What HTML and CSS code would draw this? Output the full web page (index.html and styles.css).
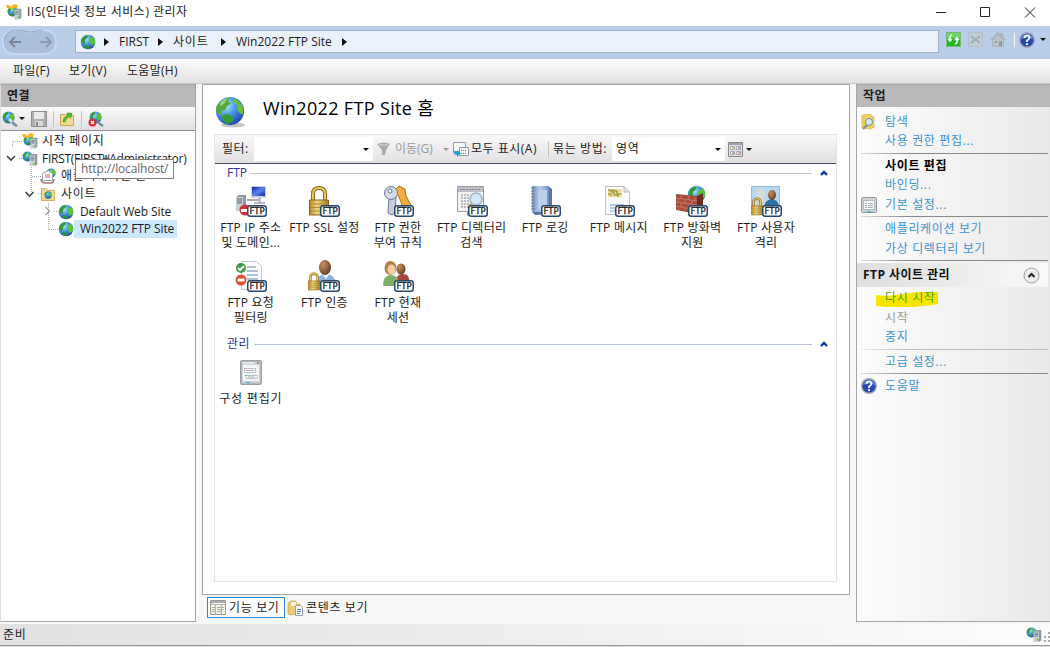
FILE: index.html
```html
<!DOCTYPE html>
<html lang="ko">
<head>
    <meta charset="UTF-8">
    <meta name="viewport" content="width=device-width, initial-scale=1.0">
    <title>IIS(인터넷 정보 서비스) 관리자</title>
    <link rel="stylesheet" href="styles.css">
</head>
<body>
    <!-- Icons -->
    <svg class="defs" width="0" height="0">
        <defs>
            <radialGradient id="sea" cx="0.35" cy="0.3" r="0.75">
                <stop offset="0" stop-color="#b5ebfb"/><stop offset="0.45" stop-color="#4b9be6"/><stop offset="1" stop-color="#1c45b0"/>
            </radialGradient>
            <linearGradient id="gold" x1="0" x2="1" y1="0" y2="0">
                <stop offset="0" stop-color="#b8892a"/><stop offset="0.4" stop-color="#f0d77c"/><stop offset="1" stop-color="#a87a1c"/>
            </linearGradient>
            <radialGradient id="skin" cx="0.35" cy="0.3" r="0.8">
                <stop offset="0" stop-color="#c98d5c"/><stop offset="1" stop-color="#5b3a22"/>
            </radialGradient>
            <linearGradient id="screen" x1="0" x2="1" y1="0" y2="1">
                <stop offset="0" stop-color="#0a1fa0"/><stop offset="0.5" stop-color="#5d86f0"/><stop offset="1" stop-color="#0d25a8"/>
            </linearGradient>
            <linearGradient id="book" x1="0" x2="1" y1="0" y2="0">
                <stop offset="0" stop-color="#7d98c2"/><stop offset="0.5" stop-color="#b3caea"/><stop offset="1" stop-color="#6b8bc0"/>
            </linearGradient>
        </defs>
        <symbol id="globe" viewBox="0 0 32 32">
            <circle cx="16" cy="16" r="15" fill="url(#sea)"/>
            <path d="M3 9Q8 2 15 2l-1 4 3 2-4 3-3 5-3-1-1 5-4-2Q0 13 3 9z" fill="#54ab3c"/>
            <path d="M20 3q7 2 10 9v8l-4-2-3-5 1-3-4-3z" fill="#6cc040"/>
            <path d="M7 21l6-2 7 4-1 4-5 3q-5-2-7-9z" fill="#359c34"/>
            <path d="M5 8q4-5 8-5l-3 5-4 3z" fill="#c5edbb" opacity=".6"/>
        </symbol>
        <symbol id="globe-small" viewBox="0 0 16 16">
            <circle cx="8" cy="8" r="7.300" fill="url(#sea)"/>
            <path d="M1 7q1-5 6-6l1 2-3 3v3l-2 1z" fill="#2f9e3a"/>
            <path d="M10 4l4-1q2 4 1 7l-3 2-3-4z" fill="#58c43a"/>
            <path d="M5 11l4 1v3q-3 0-5-2z" fill="#2a9438"/>
        </symbol>
        <symbol id="server" viewBox="0 0 12 16">
            <path d="M1 2l3-2h7v14l-3 2H1z" fill="#8d99a3"/>
            <path d="M1 2h7v14H1z" fill="#c9d0d6"/>
            <path d="M2 4h5M2 6h5M2 8h5" stroke="#5d6b78"/>
            <path d="M5 12h3v2H5z" fill="#7ac520"/>
        </symbol>
        <symbol id="site-server" viewBox="0 0 16 16">
            <use href="#globe-small" x="0" y="0" width="11" height="11"/>
            <use href="#server" x="7" y="2" width="9" height="14"/>
        </symbol>
        <symbol id="start-page" viewBox="0 0 16 16">
            <use href="#globe-small" x="1" y="2" width="11" height="11"/>
            <path d="M0 1l3 0 2 2 3-3 4 1-1 3-3 0-3 1-4-1z" fill="#f3b61f"/>
            <use href="#server" x="8" y="4" width="8" height="12"/>
        </symbol>
        <symbol id="connect" viewBox="0 0 18 16">
            <use href="#globe-small" x="1" y="0" width="13" height="13"/>
            <path d="M9 9l4 4 3 2" stroke="#6b8fa0" stroke-width="2.500" fill="none"/>
            <path d="M8 8l3 3" stroke="#d5dfe8" stroke-width="3"/>
        </symbol>
        <symbol id="disconnect" viewBox="0 0 18 16">
            <use href="#globe-small" x="2" y="0" width="13" height="13"/>
            <path d="M10 10l3 3 3 2" stroke="#6b8fa0" stroke-width="2.500" fill="none"/>
            <circle cx="5.500" cy="11.500" r="4" fill="#d8302c"/>
            <path d="M4 10l3 3m0-3l-3 3" stroke="#fff" stroke-width="1.300"/>
        </symbol>
        <symbol id="save" viewBox="0 0 16 16">
            <path d="M.5.5h15v15H.5z" fill="#adadad" stroke="#8c8c8c"/>
            <path d="M3 1h10v7H3z" fill="#e9e9e9"/><path d="M4 10h8v5H4z" fill="#d8d8d8"/><path d="M5 11h2v4H5z" fill="#888"/>
        </symbol>
        <symbol id="up-folder" viewBox="0 0 16 16">
            <path d="M1.500 3.500h5l1 1h7v10h-13z" fill="#f3dc95" stroke="#cfa650"/>
            <path d="M4 11q0-5 4-6V2l5 0-1 5-2-1q-3 1-4 5z" fill="#55b82c" stroke="#378a18" stroke-width=".5"/>
        </symbol>
        <symbol id="sites" viewBox="0 0 16 16">
            <path d="M1.500 2.500h5l1 2h7v10h-13z" fill="#f3d98e" stroke="#d5b060"/>
            <use href="#globe-small" x="4" y="5" width="8" height="8"/>
        </symbol>
        <symbol id="app-pool" viewBox="0 0 16 16">
            <use href="#globe-small" x="6" y="0" width="10" height="10"/>
            <path d="M2.500 5.500l6-3 4 3v7h-10z" fill="#fff" stroke="#98a3b3"/><path d="M5 7h5M5 9h5" stroke="#d35c5c"/>
            <path d="M1 11q0 4 5 4h4q4 0 4-4" stroke="#a9736b" fill="none" stroke-width="1.500"/>
        </symbol>
        <symbol id="ftp-tag" viewBox="0 0 20 12">
            <rect x=".75" y=".75" width="18.500" height="10.500" rx="2.500" fill="#fff" stroke="#29496b" stroke-width="1.500"/>
            <text x="10" y="9" class="tag-text">FTP</text>
        </symbol>
        <symbol id="lock" viewBox="0 0 20 30">
            <path d="M4 15V8q0-6 6-6t6 6v7" fill="none" stroke="#8d6c20" stroke-width="4"/>
            <path d="M4 15V8q0-6 6-6t6 6v7" fill="none" stroke="#e3c667" stroke-width="2"/>
            <path d="M.5 14h19v15H.5z" fill="url(#gold)" stroke="#8d6516"/>
            <path d="M1 18h18M1 21.500h18M1 25h18" stroke="#b08c38"/>
        </symbol>
        <symbol id="ip" viewBox="0 0 34 34">
            <use href="#server" x="1" y="8" width="12" height="20"/>
            <path d="M13 15h12v-4" stroke="#aaa" fill="none" stroke-width="2"/>
            <path d="M17 1h15v12H17z" fill="#cdd2dc"/><path d="M18 2h13v9H18z" fill="url(#screen)"/>
            <path d="M24 13h3v4h4v2H20v-2h4z" fill="#b5bac3"/>
            <circle cx="11" cy="25" r="5.500" fill="#d4323a"/><path d="M7 24h6v3H7z" fill="#fff"/>
        </symbol>
        <symbol id="ssl" viewBox="0 0 34 34"><use href="#lock" x="2" y="1" width="20" height="30"/></symbol>
        <symbol id="keys" viewBox="0 0 34 34">
            <path d="M14 5l4-4 6 3 1 7 5 9-3 6-4-1-5-13z" fill="#f1ae3c" stroke="#b0731a"/>
            <path d="M8 12h7l-1 15-3 3-4-2z" fill="#c7cddd" stroke="#707991"/>
            <circle cx="10" cy="8" r="6.500" fill="#d5dae6" stroke="#707991"/>
            <circle cx="9" cy="6" r="2" fill="#fff" stroke="#707991"/>
        </symbol>
        <symbol id="browse" viewBox="0 0 34 34">
            <path d="M2.500 1.500h26v25h-12l-4 4v-4h-10z" fill="#f2f3f4" stroke="#969ca3"/>
            <path d="M3 2h25v5H3z" fill="#bdc1c7"/>
            <path d="M5 4.500h20M6 10h8M6 13h8M6 16h8M6 19h8M6 22h8" stroke="#7d848c" stroke-dasharray="2 1"/>
            <circle cx="21" cy="14" r="6" fill="#cfe8fa" stroke="#9fb4c6" stroke-width="1.500"/>
            <path d="M17 19l-4 4" stroke="#e39a43" stroke-width="3"/>
        </symbol>
        <symbol id="log" viewBox="0 0 34 34">
            <path d="M4 1h16l4 3v25l-17 1-3-3z" fill="#5874a5"/>
            <path d="M4 1h17v26H4z" fill="url(#book)"/><path d="M10 5h9v19h-9z" fill="#bdd0eb"/>
            <path d="M3 3h4M3 6h4M3 9h4M3 12h4M3 15h4M3 18h4M3 21h4M3 24h4" stroke="#6a7890"/>
        </symbol>
        <symbol id="message" viewBox="0 0 34 34">
            <path d="M3.500 1.500h19l5 5v23h-24z" fill="#fafbfc" stroke="#bcc1c6"/>
            <path d="M22 2v5h5" fill="#e3e3e3" stroke="#bbb"/>
            <path d="M6 4h14v8H6z" fill="#eddf8e"/>
            <path d="M6 5h3v2h3v3h4v2M11 4v2h4v3h4M6 9h3v2" fill="none" stroke="#8a7b3c"/>
            <path d="M8 20h14M8 23h14M8 26h14" stroke="#7897c6"/>
        </symbol>
        <symbol id="firewall" viewBox="0 0 34 34">
            <use href="#globe-small" x="12" y="0" width="19" height="19"/>
            <path d="M1 9l21 2v18L1 25z" fill="#a74b3b"/>
            <path d="M1 13l21 3M1 17l21 3M1 21l21 4M6 10v4M14 11v4M20 12v4M3 14v3M10 15v4M17 16v4M6 18v4M14 19v5M3 22v3M10 23v4" stroke="#c98270" stroke-width=".8" fill="none"/>
            <path d="M22 11l6-3v17l-6 4z" fill="#702b22"/>
        </symbol>
        <symbol id="isolation" viewBox="0 0 34 34">
            <path d="M2.500 1.500h28v20h-28z" fill="#b8d9ee" stroke="#98b9d0"/>
            <path d="M4 20q1-6 8-7 7 1 8 7z" fill="#cbd6dd"/><circle cx="12" cy="9" r="5" fill="#d7dcdf"/>
            <path d="M15 21q1-6 8-7 6 1 7 7z" fill="#2d6fab"/><ellipse cx="23" cy="10" rx="4" ry="5" fill="url(#skin)"/>
            <use href="#lock" x="2" y="12" width="12" height="19"/>
        </symbol>
        <symbol id="filtering" viewBox="0 0 34 34">
            <path d="M7.500 1.500h15l5 5v23h-20z" fill="#fafcfe" stroke="#b9c7d2"/>
            <path d="M13 7h9M13 11h11M13 15h11M13 19h11M13 23h11" stroke="#6387b5"/>
            <circle cx="7" cy="8" r="5" fill="#379c42"/><path d="M4 8l2 2 4-4" stroke="#fff" fill="none" stroke-width="2"/>
            <circle cx="7" cy="20" r="5.500" fill="#e4502e"/><path d="M3.500 18.500h7v3h-7z" fill="#fff"/>
        </symbol>
        <symbol id="auth" viewBox="0 0 34 34">
            <path d="M9 24q1-10 10-10t10 10z" fill="#8ab5d8"/><path d="M15 14l4 5 3-5z" fill="#fff"/>
            <ellipse cx="18" cy="7.500" rx="6" ry="7.500" fill="url(#skin)"/>
            <use href="#lock" x="1" y="12" width="12" height="19"/>
        </symbol>
        <symbol id="sessions" viewBox="0 0 34 34">
            <path d="M15 22q0-8 7-8t6 8z" fill="#aa453e"/><ellipse cx="20" cy="9" rx="4.500" ry="5.500" fill="url(#skin)"/>
            <path d="M2 26q0-11 8-11t8 11z" fill="#7fad63"/>
            <ellipse cx="9.500" cy="8" rx="6" ry="7" fill="#b58145"/><ellipse cx="10.500" cy="9.500" rx="4" ry="5" fill="#f2cda8"/>
        </symbol>
        <symbol id="config" viewBox="0 0 22 25">
            <rect x=".75" y=".75" width="20.500" height="23.500" rx="1.500" fill="#cdd1d5" stroke="#989ea4" stroke-width="1.500"/>
            <path d="M3 5h16v16H3z" fill="#f3f5f6"/><path d="M3 3h11" stroke="#fff"/><path d="M17 3h2" stroke="#555"/>
            <path d="M4.500 8.500h11v4h-11zM6.500 15.500h11v3h-11z" fill="#fff" stroke="#bac0c5"/>
            <path d="M6 10.500h8M8 17h7" stroke="#a3aeb5"/><path d="M6 22.500h4" stroke="#34bde0"/><path d="M5 15.500h2" stroke="#34bde0"/>
        </symbol>
        <symbol id="settings" viewBox="0 0 16 16">
            <rect x=".5" y=".5" width="15" height="15" rx="1" fill="#d0d4d8" stroke="#90979d"/>
            <path d="M2.500 3.500h11v9h-11z" fill="#fafafa" stroke="#b0b8c0"/>
            <path d="M4 6.500h2M7 6.500h5M4 8.500h2M7 8.500h5M4 10.500h2M7 10.500h5" stroke="#a2adb7"/><path d="M6 14.500h4" stroke="#2ec0e8"/>
        </symbol>
        <symbol id="help" viewBox="0 0 16 16">
            <circle cx="8" cy="8" r="7.300" fill="#2648b4" stroke="#a3a8b4" stroke-width="1.400"/>
            <path d="M2 7q1-5 6-5t6 5q-6-2-12 0z" fill="#6484d6"/>
            <path d="M5.500 6q0-2.500 2.500-2.500t2.500 2.200Q10.500 7 8 8.500V10" fill="none" stroke="#fff" stroke-width="1.700"/>
            <circle cx="8" cy="12.200" r="1.100" fill="#fff"/>
        </symbol>
        <symbol id="explore" viewBox="0 0 16 16">
            <path d="M1 1l9-1v2l3 1v10l-3 2-9-1z" fill="#efcf5f" stroke="#d3b253" stroke-width=".7"/>
            <circle cx="8" cy="8" r="3.500" fill="#d4ebf6" stroke="#6f90a5"/><path d="M6 11l-4 4" stroke="#7f8f9b" stroke-width="2"/>
        </symbol>
        <symbol id="funnel" viewBox="0 0 14 14">
            <path d="M0 2q7-3 13 0L9 8l-1 5H5V8z" fill="#aaa"/><path d="M2 3h9" stroke="#d9d9d9"/>
        </symbol>
        <symbol id="show-all" viewBox="0 0 16 16">
            <path d="M.5 1.500h12v9H.5z" fill="#f7fafc" stroke="#8a9bae"/><path d="M6.500 6.500h9v8h-9z" fill="#fff" stroke="#8a9bae"/>
            <path d="M8 9.500h6M8 12.500h6" stroke="#5878a5" stroke-dasharray="1 1"/>
            <path d="M0 8q1 3 4 3V9l4 3.500L4 16v-2q-4 0-4-6z" fill="#29a0d2"/>
        </symbol>
        <symbol id="view" viewBox="0 0 15 15">
            <path d="M.5.5h14v14H.5z" fill="#e0e0e0" stroke="#888"/><path d="M1 2h13" stroke="#99a5bb" stroke-width="2"/>
            <path d="M2.500 4.500h4v3h-4zM8.500 4.500h4v3h-4zM2.500 9.500h4v3h-4zM8.500 9.500h4v3h-4z" fill="#fff" stroke="#aaa"/>
            <path d="M4 6h2" stroke="#b89430"/><path d="M10 6h2M4 11h2" stroke="#3e68bd"/><path d="M10 11h2" stroke="#d2582f"/>
        </symbol>
        <symbol id="content" viewBox="0 0 16 16">
            <path d="M1 3l3-2h5v3h4v9l-9 2-3-1z" fill="#ecca78" stroke="#c5a255" stroke-width=".7"/><path d="M4 2h5v4H4z" fill="#f9f3df"/>
            <path d="M8.500 5.500h5l2 2v8h-7z" fill="#fff" stroke="#91a0b2"/><path d="M10 9.500h4M10 11.500h4M10 13.500h3" stroke="#5378b5"/>
        </symbol>
        <symbol id="features" viewBox="0 0 16 15">
            <path d="M.5.500h15v14H.5z" fill="#f2f2ee" stroke="#9a9a94"/><path d="M1 2h14" stroke="#a9adb0" stroke-width="2"/>
            <path d="M1 4.500h14M5.500 4v10M11.500 4v10" stroke="#b5b5b0"/><path d="M2 7.500h3M2 9.500h3M2 11.500h3M7 7.500h4M7 9.500h4M7 11.500h4M12 7.500h2M12 9.500h2" stroke="#b1ac92"/>
        </symbol>
    </svg>

    <!-- Title bar -->
    <div class="titlebar">
        <svg class="icon16"><use href="#start-page"/></svg>
        <span class="title">IIS(인터넷 정보 서비스) 관리자</span>
        <svg class="window-buttons" width="110" height="14" fill="none" stroke="#222">
            <path d="M6 7.500h10M50.500 2.500h9v9h-9zM95 2.500l10 10M105 2.500l-10 10"/>
        </svg>
    </div>

    <!-- Address bar -->
    <div class="addressbar">
        <svg class="nav" width="56" height="28" viewBox="0 0 56 28">
            <path d="M14 2q6 0 10 1.500 4 1 9 0 5-1.500 9-1.500 13 1 13 12T43 26H13Q2 25 2 14T14 2z" fill="#a9bfdb" stroke="#cbdcf0" stroke-width="1.500"/>
            <path d="M3 13Q4 3 14 2q6 0 10 1.500 4 1 9 0 5-1.500 9-1.500" fill="none" stroke="#8fa5c2"/>
            <path d="M20 14H9m5-5l-5 5 5 5" fill="none" stroke="#7c8794" stroke-width="2"/>
            <path d="M39 14h11m-5-5l5 5-5 5" fill="none" stroke="#8d9bb0" stroke-width="2"/>
        </svg>
        <div class="path">
            <svg class="icon16"><use href="#globe-small"/></svg>
            <i class="arrow"></i><span class="crumb first">FIRST</span>
            <i class="arrow"></i><span class="crumb sites">사이트</span>
            <i class="arrow"></i><span class="crumb site">Win2022 FTP Site</span>
            <i class="arrow"></i>
        </div>
        <svg width="15" height="15"><path d="M.5.500h14v14H.5z" fill="#1fba1c" stroke="#77bb74"/><path d="M1 1h13v5H1z" fill="#69d562"/><path d="M6 3q-3 1-2 5M2 7l2 2 2-2M9 12q3-1 2-5M9 8l2-2 2 2" stroke="#fff" fill="none" stroke-width="1.700"/></svg>
        <svg width="15" height="15"><path d="M.5.500h14v14H.5z" fill="#c3ccd6" stroke="#b4bfcc"/><path d="M3 4l9 7M12 4l-9 7" stroke="#a0abb8" stroke-width="1.700"/></svg>
        <svg width="16" height="16"><path d="M0 8l8-8 2 2V1h3v4l3 3h-2v7H2V8z" fill="#a9b3be"/><path d="M3 8l5-5 5 5v6H3z" fill="#bac2cb"/><path d="M5 9h2v2H5zM9 9h3v5H9z" fill="#8f98a3"/></svg>
        <i class="divider"></i>
        <svg class="icon16 help"><use href="#help"/></svg>
        <i class="caret"></i>
    </div>

    <div class="menubar">
        <span class="file">파일(F)</span><span class="show">보기(V)</span><span class="helpmenu">도움말(H)</span>
    </div>

    <div class="main">
        <!-- Connections -->
        <div class="panel connections">
            <div class="panel-title">연결</div>
            <div class="toolbar">
                <svg width="18" height="16"><use href="#connect"/></svg>
                <i class="caret"></i>
                <svg class="icon16"><use href="#save"/></svg>
                <i class="sep"></i>
                <svg class="icon16"><use href="#up-folder"/></svg>
                <i class="sep"></i>
                <svg width="18" height="16"><use href="#disconnect"/></svg>
            </div>
            <div class="tree">
                <svg class="tree-lines" width="80" height="110" fill="none">
                    <path d="M11.500 16V10.500H22M18 27.500h4M30.500 36v26M31 45.500h9M37 62.500h4M47.500 72v27M53 80.500h4M48 98.500h9" stroke="#a8a8a8" stroke-dasharray="1 1"/>
                    <path d="M6 25l4 4 4-4M24.500 61l4 4 4-4" stroke="#444" stroke-width="1.600"/>
                    <path d="M44.500 76l4 4-4 4" stroke="#a0a0a0" stroke-width="1.400"/>
                </svg>
                <div class="node level0"><svg class="icon16"><use href="#start-page"/></svg><span>시작 페이지</span></div>
                <div class="node level0"><svg class="icon16"><use href="#site-server"/></svg><span class="server-name">FIRST(FIRST₩Administrator)</span></div>
                <div class="node level1"><svg class="icon16"><use href="#app-pool"/></svg><span>애플리케이션 풀</span></div>
                <div class="node level1"><svg class="icon16"><use href="#sites"/></svg><span>사이트</span></div>
                <div class="node level2"><svg class="icon16"><use href="#globe-small"/></svg><span>Default Web Site</span></div>
                <div class="node level2 selected"><svg class="icon16"><use href="#globe-small"/></svg><span>Win2022 FTP Site</span></div>
                <div class="tooltip">http://localhost/</div>
            </div>
        </div>

        <!-- Features -->
        <div class="center">
            <div class="home">
                <div class="heading">
                    <svg width="31" height="33"><ellipse cx="18" cy="29" rx="12" ry="2.500" fill="#c5c5c5"/><use href="#globe" width="30" height="30"/></svg>
                    <h1>Win2022 FTP Site 홈</h1>
                </div>
                <div class="features">
                    <div class="filterbar">
                        <span class="filter-label">필터:</span>
                        <div class="combo filter"><i class="caret"></i></div>
                        <svg width="14" height="14"><use href="#funnel"/></svg>
                        <span class="go">이동(G)</span><i class="caret dim"></i>
                        <svg class="icon16"><use href="#show-all"/></svg>
                        <span class="show-all">모두 표시(A)</span>
                        <i class="sep"></i>
                        <span class="group-label">묶는 방법:</span>
                        <div class="combo group"><span>영역</span><i class="caret"></i></div>
                        <svg width="15" height="15"><use href="#view"/></svg><i class="caret last"></i>
                    </div>
                    <div class="group-title"><span>FTP</span><i></i><svg width="8" height="6"><path d="M1 5l3-3 3 3" fill="none" stroke="#0a3a9c" stroke-width="2.400"/></svg></div>
                    <div class="grid">
                        <div class="item"><svg width="34" height="34"><use href="#ip"/><use href="#ftp-tag" x="13" y="20" width="20" height="12"/></svg><span>FTP IP 주소<br>및 도메인...</span></div>
                        <div class="item"><svg width="34" height="34"><use href="#ssl"/><use href="#ftp-tag" x="13" y="20" width="20" height="12"/></svg><span>FTP SSL 설정</span></div>
                        <div class="item"><svg width="34" height="34"><use href="#keys"/><use href="#ftp-tag" x="13" y="20" width="20" height="12"/></svg><span>FTP 권한<br>부여 규칙</span></div>
                        <div class="item"><svg width="34" height="34"><use href="#browse"/><use href="#ftp-tag" x="13" y="20" width="20" height="12"/></svg><span>FTP 디렉터리<br>검색</span></div>
                        <div class="item"><svg width="34" height="34"><use href="#log"/><use href="#ftp-tag" x="13" y="20" width="20" height="12"/></svg><span>FTP 로깅</span></div>
                        <div class="item"><svg width="34" height="34"><use href="#message"/><use href="#ftp-tag" x="13" y="20" width="20" height="12"/></svg><span>FTP 메시지</span></div>
                        <div class="item"><svg width="34" height="34"><use href="#firewall"/><use href="#ftp-tag" x="13" y="20" width="20" height="12"/></svg><span>FTP 방화벽<br>지원</span></div>
                        <div class="item"><svg width="34" height="34"><use href="#isolation"/><use href="#ftp-tag" x="13" y="20" width="20" height="12"/></svg><span>FTP 사용자<br>격리</span></div>
                        <div class="item"><svg width="34" height="34"><use href="#filtering"/><use href="#ftp-tag" x="13" y="20" width="20" height="12"/></svg><span>FTP 요청<br>필터링</span></div>
                        <div class="item"><svg width="34" height="34"><use href="#auth"/><use href="#ftp-tag" x="13" y="20" width="20" height="12"/></svg><span>FTP 인증</span></div>
                        <div class="item"><svg width="34" height="34"><use href="#sessions"/><use href="#ftp-tag" x="13" y="20" width="20" height="12"/></svg><span>FTP 현재<br>세션</span></div>
                    </div>
                    <div class="group-title manage"><span>관리</span><i></i><svg width="8" height="6"><path d="M1 5l3-3 3 3" fill="none" stroke="#0a3a9c" stroke-width="2.400"/></svg></div>
                    <div class="grid">
                        <div class="item config"><svg width="22" height="25"><use href="#config"/></svg><span>구성 편집기</span></div>
                    </div>
                </div>
            </div>
            <div class="tabs">
                <div class="tab active"><svg width="16" height="15"><use href="#features"/></svg><span>기능 보기</span></div>
                <div class="tab"><svg class="icon16"><use href="#content"/></svg><span>콘텐츠 보기</span></div>
            </div>
        </div>

        <!-- Actions -->
        <div class="panel actions">
            <div class="panel-title">작업</div>
            <div class="action-list">
                <div class="action"><svg class="icon16"><use href="#explore"/></svg>탐색</div>
                <div class="action">사용 권한 편집...</div>
                <hr>
                <div class="action strong">사이트 편집</div>
                <div class="action">바인딩...</div>
                <div class="action"><svg class="icon16"><use href="#settings"/></svg>기본 설정...</div>
                <hr>
                <div class="action">애플리케이션 보기</div>
                <div class="action">가상 디렉터리 보기</div>
                <hr>
                <div class="section"><span>FTP 사이트 관리</span>
                    <svg width="17" height="17"><circle cx="8.500" cy="8.500" r="7.500" fill="#eee" stroke="#a0a0a0"/><path d="M5.500 10l3-3 3 3" fill="none" stroke="#222" stroke-width="2"/></svg>
                </div>
                <div class="action restart">
                    <svg class="marker" width="63" height="15"><path d="M0 3l10 1 17-2 15-2h20v12l-6 1-18 2H10L0 14z" fill="#f7e500"/></svg>
                    <span>다시 시작</span>
                </div>
                <div class="action disabled">시작</div>
                <div class="action">중지</div>
                <hr class="light">
                <div class="action">고급 설정...</div>
                <hr>
                <div class="action"><svg class="icon16"><use href="#help"/></svg>도움말</div>
            </div>
        </div>
    </div>

    <div class="statusbar">
        <span>준비</span>
        <svg class="icon16"><use href="#site-server"/></svg>
        <svg class="grip" width="6" height="10"><path d="M4 1h2M0 5h2M4 5h2M0 9h2M4 9h2" stroke="#aaa" stroke-width="2"/></svg>
    </div>
    <div class="bottom-edge"></div>
</body>
</html>
```
FILE: styles.css
```css
* {
    box-sizing: border-box;
}
body {
    margin: 0;
    width: 1050px;
    height: 647px;
    overflow: hidden;
    display: flex;
    flex-direction: column;
    background: #f7f7f7;
    color: #1c1c1c;
    font-family: "Open Sans", "Noto Sans CJK KR", sans-serif;
    font-size: 12px;
    line-height: 16px;
    white-space: nowrap;
}
svg {
    flex: none;
    display: block;
}
.defs {
    position: absolute;
}
.icon16 {
    width: 16px;
    height: 16px;
}
.tag-text {
    font: 8.5px "DejaVu Sans", sans-serif;
    letter-spacing: 0;
    text-anchor: middle;
    fill: #222;
    stroke: #222;
    stroke-width: 0.3px;
}
.caret {
    flex: none;
    border: 3px solid transparent;
    border-top-color: #111;
    border-bottom: 0;
}
.caret.dim {
    border-top-color: #999;
}
.sep {
    width: 1px;
    height: 16px;
    background: #c5c5ba;
}

/* Window top */
.titlebar {
    height: 26px;
    flex: none;
    display: flex;
    align-items: center;
    padding: 0 10px 3px 6px;
    background: #fff;
}
.title {
    margin-left: 5px;
    letter-spacing: 0.5px;
}
.window-buttons {
    margin-left: auto;
}
.addressbar {
    height: 33px;
    flex: none;
    display: flex;
    align-items: center;
    padding: 0 4px 6px 1px;
    background: #b9cfe9;
}
.nav {
    margin-top: 4px;
}
.path {
    flex: none;
    display: flex;
    align-items: center;
    width: 864px;
    height: 23px;
    margin: 4px 7px 0 18px;
    padding-left: 4px;
    border: 1px solid #a1b2c8;
    background: #eaf1fa;
}
.arrow {
    border: 4px solid transparent;
    border-left: 5px solid #111;
    border-right: 0;
}
.path .icon16 {
    margin-right: 8px;
}
.crumb {
    margin-left: 10px;
}
.crumb.first {
    width: 39px;
}
.crumb.sites {
    width: 48px;
    letter-spacing: 0.8px;
}
.crumb.site {
    width: 106px;
}
.addressbar > svg:not(.nav) {
    margin-right: 7px;
}
.divider {
    width: 1px;
    height: 14px;
    margin: 0 4px 0 1px;
    background: #f4f8fd;
}
.addressbar > svg.help:not(.nav) {
    margin-right: 5px;
}
.menubar {
    height: 24px;
    flex: none;
    display: flex;
    align-items: center;
    padding-left: 13px;
    background: linear-gradient(#fcfcfc, #e2e2e2);
    letter-spacing: 0.3px;
}
.menubar span {
    width: 56px;
}
.menubar .show {
    width: 58px;
}

/* Panels */
.main {
    height: 539px;
    flex: none;
    display: flex;
    border-top: 1px solid #c8c8c8;
}
.panel-title {
    height: 22px;
    padding: 3px 6px;
    background: #bbb8bb;
    font-weight: bold;
    letter-spacing: 0.5px;
}
.connections {
    width: 196px;
    border: 1px solid #a5a5a5;
    border-left-color: #ddd;
    background: #fff;
}
.toolbar {
    height: 24px;
    display: flex;
    align-items: center;
    background: linear-gradient(#fafafa, #e2e0e2);
    border-bottom: 1px solid #8e8e98;
}
.toolbar .caret {
    margin-right: 6px;
}
.toolbar .sep {
    margin: 0 5px 0 6px;
}
.tree {
    position: relative;
    padding-top: 1px;
}
.tree-lines {
    position: absolute;
    left: 0;
    top: 0;
}
.node {
    display: flex;
    align-items: center;
    height: 17.7px;
}
.node span {
    height: 18px;
    line-height: 17px;
    padding: 0 4px;
    letter-spacing: 0.7px;
}
.node svg {
    position: relative;
}
.node .server-name {
    letter-spacing: -0.27px;
}
.level0 {
    padding-left: 21px;
}
.level1 {
    padding-left: 39px;
}
.level1 span {
    padding-left: 5px;
}
.level2 {
    padding-left: 57px;
}
.node.level2 span {
    padding: 0 3px 0 6px;
    letter-spacing: -0.1px;
}
.node.selected span {
    background: #cce8ff;
}
.tooltip {
    position: absolute;
    left: 74px;
    top: 28px;
    height: 20px;
    padding: 1px 5px;
    background: #fff;
    border: 1px solid #808080;
    color: #666;
    letter-spacing: -0.15px;
}

/* Center */
.center {
    width: 648px;
    margin-left: 6px;
    display: flex;
    flex-direction: column;
}
.home {
    height: 511px;
    padding: 0 11px;
    background: #fff;
    border: 1px solid #a5a5a5;
}
.heading {
    display: flex;
    height: 49px;
    padding: 11px 0 0 1px;
}
.heading h1 {
    margin: 0 0 0 17px;
    font-size: 18px;
    line-height: 24px;
    font-weight: normal;
    letter-spacing: 0.35px;
    color: #000;
}
.features {
    height: 448px;
    width: 623px;
    border: 1px solid #e4e4e4;
}
.filterbar {
    height: 29px;
    display: flex;
    align-items: center;
    padding-left: 7px;
    background: linear-gradient(#f9f9f9, #e2e0e2);
    border-bottom: 1px solid #4d4868;
}
.filter-label {
    width: 32px;
    letter-spacing: 0.5px;
}
.combo {
    display: flex;
    align-items: center;
    height: 24px;
    padding: 0 4px;
    background: #fff;
    letter-spacing: 0.7px;
}
.combo .caret {
    margin-left: auto;
}
.combo.filter {
    width: 119px;
    margin-right: 4px;
}
.go {
    width: 48px;
    margin-left: 4px;
    color: #999;
}
.filterbar .dim {
    margin-right: 4px;
}
.show-all {
    width: 77px;
    margin-left: 2px;
    letter-spacing: 0.5px;
}
.filterbar > .sep {
    margin-right: 4px;
}
.group-label {
    width: 59px;
    letter-spacing: 0.6px;
}
.combo.group {
    width: 113px;
    margin-right: 3px;
}
.caret.last {
    margin-left: 3px;
}
.group-title {
    display: flex;
    align-items: center;
    height: 18px;
    padding: 0 8px 0 12px;
    color: #2c3590;
}
.manage {
    letter-spacing: 0.5px;
}
.group-title i {
    height: 1px;
    flex: 1;
    margin: 0 8px 0 4px;
    background: #b5c4dc;
}
.grid {
    display: grid;
    grid-template-columns: repeat(8, 73.6px);
    grid-auto-rows: 75px;
    padding-top: 3px;
    margin-left: -1px;
}
.item {
    display: flex;
    flex-direction: column;
    align-items: center;
    text-align: center;
    line-height: 14.5px;
    letter-spacing: 0.25px;
}
.item span {
    margin-top: 2px;
}
.item.config {
    padding-top: 4px;
    letter-spacing: 0.8px;
}
.item.config span {
    margin-top: 7px;
}
.tabs {
    display: flex;
    padding: 2px 0 0 5px;
}
.tab {
    display: flex;
    align-items: center;
    height: 21px;
    padding: 0 2px;
    letter-spacing: 0.65px;
}
.tab span {
    margin-left: 3px;
}
.tab.active {
    width: 78px;
    border: 1px solid #2a8ad8;
    background: #fff;
}

/* Actions */
.actions {
    width: 194px;
    margin-left: 6px;
    border: 1px solid #a5a5a5;
    border-right: 0;
    background: linear-gradient(90deg, #fcfcfc, #e9e9e9);
}
.action-list {
    padding-top: 4.5px;
}
.action {
    position: relative;
    height: 19.5px;
    padding-left: 28px;
    line-height: 19px;
    letter-spacing: 0.65px;
    color: #3d93cf;
}
.action .icon16 {
    position: absolute;
    left: 4px;
    top: 2px;
}
.action.strong {
    color: #000;
    font-weight: bold;
}
.action.disabled {
    color: #9a9a9a;
}
.action.restart {
    color: #4aa516;
}
.restart span {
    position: relative;
}
.marker {
    position: absolute;
    left: 19px;
    top: 4px;
}
hr {
    height: 1px;
    margin: 2px 2px 2px 4px;
    border: 0;
    background: linear-gradient(90deg, #ddd, #888 25%);
}
hr.light {
    background: linear-gradient(90deg, #eee, #bbb 25%);
}
.section {
    display: flex;
    align-items: center;
    justify-content: space-between;
    height: 24px;
    margin: 0 2px 1px 0;
    padding: 0 8px 0 6px;
    background: linear-gradient(90deg, #dedede, #f9f9f9);
    font-weight: bold;
    letter-spacing: 0.45px;
    color: #111;
}

/* Status */
.statusbar {
    height: 21px;
    flex: none;
    display: flex;
    align-items: center;
    margin-top: 2px;
    padding-left: 3px;
    background: linear-gradient(90deg, #e2e0e1, #fcfcfc);
    letter-spacing: 0.6px;
}
.statusbar .icon16 {
    margin-left: auto;
}
.grip {
    margin: 5px 0 0 2px;
}
.bottom-edge {
    height: 2px;
    border-top: 1px solid #999;
    background: #ddd;
}
```
